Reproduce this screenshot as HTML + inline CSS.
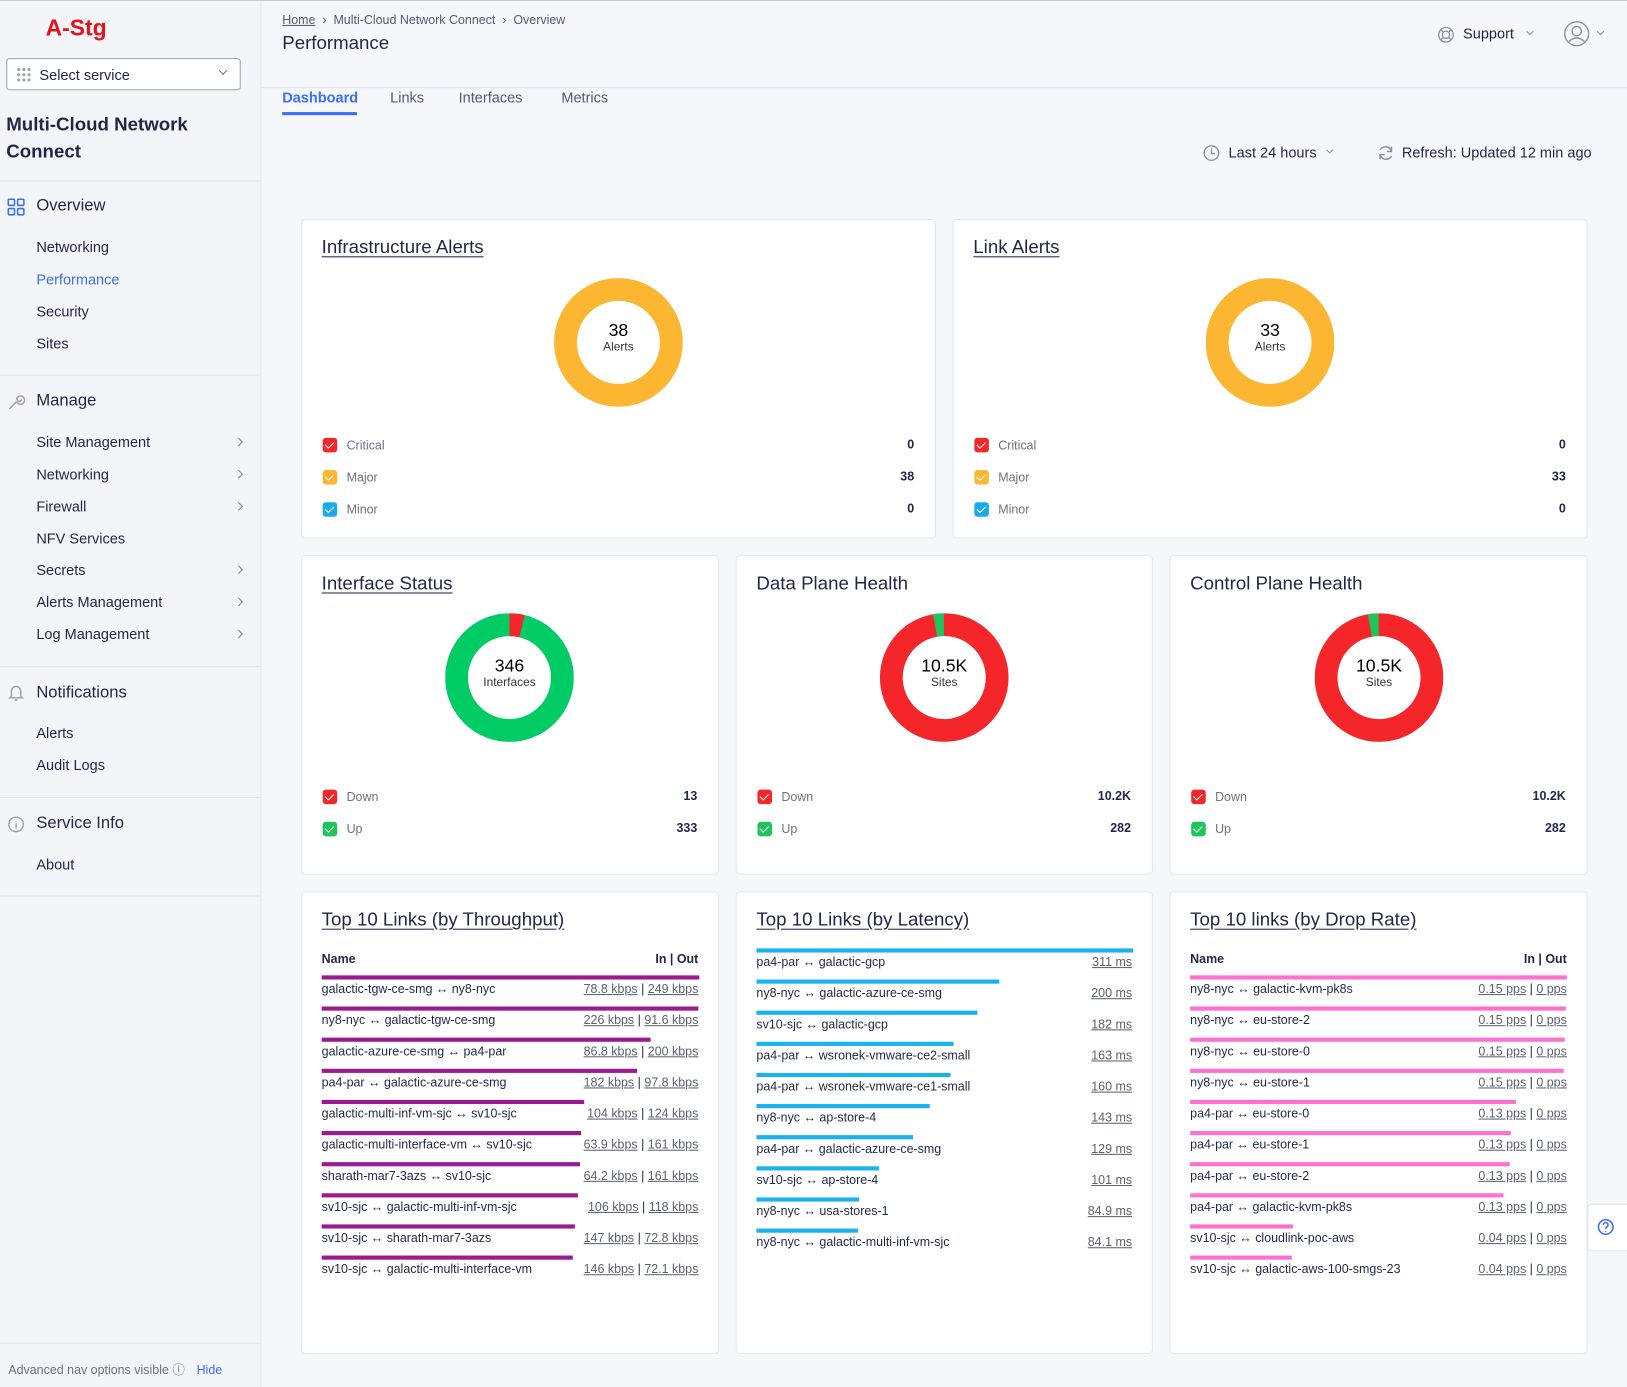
<!DOCTYPE html>
<html><head><meta charset="utf-8"><style>
*{box-sizing:border-box;margin:0;padding:0}
html,body{width:1627px;height:1386px;overflow:hidden;background:#f5f7fa}
body{font-family:"Liberation Sans",sans-serif;color:#1f2747}
#w{position:absolute;left:0;top:0;width:1568px;height:1336px;transform:scale(1.03763);transform-origin:0 0;background:#f5f7fa;border-top:1px solid #c9ccd2}
.a{position:absolute;white-space:nowrap}
#sb{position:absolute;left:0;top:0;width:252px;height:1336px;background:#f4f5f8;border-right:1px solid #e1e4ea}
.hr{position:absolute;left:0;width:252px;height:1px;background:#e1e4ea}
.ni{position:absolute;left:35px;font-size:14px;color:#1f2747}
.sec{position:absolute;left:35px;font-size:16px;color:#1f2747}
.chev{position:absolute;left:227px;width:6px;height:6px;border-right:1.3px solid #7b8194;border-top:1.3px solid #7b8194;transform:rotate(45deg)}
.card{position:absolute;background:#fff;border:1px solid #e3e6ec;border-radius:4px}
.ct{position:absolute;left:19px;top:16px;font-size:18px;text-decoration:underline;text-underline-offset:3px;color:#1f2747;white-space:nowrap}
.lg{position:absolute;left:20px;right:20px;height:16px;font-size:12px;color:#6b7185}
.cb{position:absolute;left:0;top:0;width:14px;height:14px;border-radius:3px}
.cb:after{content:"";position:absolute;left:4px;top:1.5px;width:4px;height:7px;border-right:1.8px solid #fff;border-bottom:1.8px solid #fff;transform:rotate(45deg)}
.lg span.l{position:absolute;left:23px;top:0}
.lg span.v{position:absolute;right:0;top:-1px;font-weight:bold;color:#1f2747}
.dn{position:absolute;width:124px;height:124px}
.dt{position:absolute;width:124px;text-align:center}
.dt b{display:block;font-weight:normal;font-size:17px;margin-top:41px;color:#000}
.dt i{display:block;font-style:normal;font-size:11.5px;color:#333}
.tb{position:absolute;left:19px;right:19px;font-size:12px}
.row{position:absolute;left:0;right:0;height:30px}
.bar{position:absolute;left:0;top:0;height:4px}
.rn{position:absolute;left:0;top:6px;color:#1f2747}
.rv{position:absolute;right:0;top:6px;color:#1f2747}
.rv u{color:#5b6073}
</style></head><body><div id="w">

<div id="sb">
 <div class="a" style="left:44px;top:13px;font-size:22px;font-weight:bold;color:#e8101a">A-Stg</div>
 <div class="a" style="left:6px;top:55px;width:226px;height:31px;border:1px solid #9aa0ae;border-radius:3px;background:#fff">
  <svg class="a" style="left:8px;top:7px" width="16" height="16"><g fill="#9aa0ae"><circle cx="3" cy="3" r="1.5"/><circle cx="8" cy="3" r="1.5"/><circle cx="13" cy="3" r="1.5"/><circle cx="3" cy="8" r="1.5"/><circle cx="8" cy="8" r="1.5"/><circle cx="13" cy="8" r="1.5"/><circle cx="3" cy="13" r="1.5"/><circle cx="8" cy="13" r="1.5"/><circle cx="13" cy="13" r="1.5"/></g></svg>
  <div class="a" style="left:31px;top:7px;font-size:14px">Select service</div>
  <div class="a" style="left:205px;top:8px;width:6px;height:6px;border-right:1.3px solid #6b7185;border-bottom:1.3px solid #6b7185;transform:rotate(45deg)"></div>
 </div>
 <div class="a" style="left:6px;top:106px;font-size:18px;font-weight:bold;line-height:26px">Multi-Cloud Network<br>Connect</div>
 <div class="hr" style="top:173px"></div>
 <svg class="a" style="left:7px;top:190px" width="17" height="17" fill="none" stroke="#3b6ff5" stroke-width="1.5"><rect x="1" y="1" width="6" height="6" rx="1"/><rect x="10" y="1" width="6" height="6" rx="1"/><rect x="1" y="10" width="6" height="6" rx="1"/><rect x="10" y="10" width="6" height="6" rx="1"/></svg>
 <div class="sec" style="top:189px">Overview</div>
 <div class="ni" style="top:229px">Networking</div>
 <div class="ni" style="top:260px;color:#3b6ff5">Performance</div>
 <div class="ni" style="top:291px">Security</div>
 <div class="ni" style="top:322px">Sites</div>
 <div class="hr" style="top:360px"></div>
 <svg class="a" style="left:7px;top:378px" width="17" height="17" fill="none" stroke="#9aa0ae" stroke-width="1.4"><path d="M2 15 L9 8 M9 8 a4 4 0 1 0 2-5 l-2 2 1 2 2 1 2-2"/></svg>
 <div class="sec" style="top:377px">Manage</div>
 <div class="ni" style="top:417px">Site Management</div><div class="chev" style="top:422px"></div>
 <div class="ni" style="top:448px">Networking</div><div class="chev" style="top:453px"></div>
 <div class="ni" style="top:479px">Firewall</div><div class="chev" style="top:484px"></div>
 <div class="ni" style="top:510px">NFV Services</div>
 <div class="ni" style="top:540px">Secrets</div><div class="chev" style="top:545px"></div>
 <div class="ni" style="top:571px">Alerts Management</div><div class="chev" style="top:576px"></div>
 <div class="ni" style="top:602px">Log Management</div><div class="chev" style="top:607px"></div>
 <div class="hr" style="top:641px"></div>
 <svg class="a" style="left:7px;top:658px" width="17" height="17" fill="none" stroke="#9aa0ae" stroke-width="1.4"><path d="M4 12 V7 a4.5 4.5 0 0 1 9 0 V12 L14.5 13.5 H2.5 Z M7 15.5 h3"/></svg>
 <div class="sec" style="top:658px">Notifications</div>
 <div class="ni" style="top:697px">Alerts</div>
 <div class="ni" style="top:728px">Audit Logs</div>
 <div class="hr" style="top:767px"></div>
 <svg class="a" style="left:7px;top:785px" width="17" height="17" fill="none" stroke="#9aa0ae" stroke-width="1.3"><circle cx="8.5" cy="8.5" r="7"/><path d="M8.5 7.5 v5 M8.5 5 v.8"/></svg>
 <div class="sec" style="top:784px">Service Info</div>
 <div class="ni" style="top:824px">About</div>
 <div class="hr" style="top:862px"></div>
 <div class="hr" style="top:1293px"></div>
 <div class="a" style="left:8px;top:1310px;font-size:12px;color:#6b7185">Advanced nav options visible ⓘ <span style="color:#3b6ff5;margin-left:8px">Hide</span></div>
</div>

<div class="a" style="left:272px;top:11px;font-size:12px;color:#555a70"><u>Home</u> &nbsp;›&nbsp; Multi-Cloud Network Connect &nbsp;›&nbsp; Overview</div>
<div class="a" style="left:272px;top:30px;font-size:18px">Performance</div>
<svg class="a" style="left:1385px;top:24px" width="17" height="17" fill="none" stroke="#8a90a2" stroke-width="1.3"><circle cx="8.5" cy="8.5" r="7"/><circle cx="8.5" cy="8.5" r="3.5"/><path d="M3.5 3.5l2.5 2.5M13.5 3.5l-2.5 2.5M3.5 13.5l2.5-2.5M13.5 13.5l-2.5-2.5"/></svg>
<div class="a" style="left:1410px;top:23px;font-size:14px">Support</div>
<div class="a" style="left:1472px;top:27px;width:5px;height:5px;border-right:1.2px solid #8a90a2;border-bottom:1.2px solid #8a90a2;transform:rotate(45deg)"></div>
<svg class="a" style="left:1507px;top:19px" width="25" height="25" fill="none" stroke="#8a90a2" stroke-width="1.3"><circle cx="12.5" cy="12.5" r="11.5"/><circle cx="12.5" cy="10" r="4.5"/><path d="M5 20 q7.5-7 15 0"/></svg>
<div class="a" style="left:1540px;top:27px;width:5px;height:5px;border-right:1.2px solid #8a90a2;border-bottom:1.2px solid #8a90a2;transform:rotate(45deg)"></div>
<div class="a" style="left:252px;top:83px;width:1316px;height:1px;background:#dfe4ec"></div>

<div class="a" style="left:272px;top:85px;font-size:14px;font-weight:bold;color:#3b6ff5">Dashboard</div>
<div class="a" style="left:272px;top:107px;width:72px;height:3px;background:#3b6ff5"></div>
<div class="a" style="left:376px;top:85px;font-size:14px;color:#555a70">Links</div>
<div class="a" style="left:442px;top:85px;font-size:14px;color:#555a70">Interfaces</div>
<div class="a" style="left:541px;top:85px;font-size:14px;color:#555a70">Metrics</div>

<svg class="a" style="left:1159px;top:138px" width="17" height="17" fill="none" stroke="#8a90a2" stroke-width="1.3"><circle cx="8.5" cy="8.5" r="7"/><path d="M8.5 4v5h3.5"/></svg>
<div class="a" style="left:1184px;top:138px;font-size:14px">Last 24 hours</div>
<div class="a" style="left:1279px;top:141px;width:5px;height:5px;border-right:1.2px solid #8a90a2;border-bottom:1.2px solid #8a90a2;transform:rotate(45deg)"></div>
<svg class="a" style="left:1327px;top:138px" width="17" height="17" fill="none" stroke="#8a90a2" stroke-width="1.4"><path d="M14 7 a6 6 0 0 0-11-1.5 M3 10 a6 6 0 0 0 11 1.5 M14 2.5v4.5h-4.5 M3 14.5v-4.5h4.5"/></svg>
<div class="a" style="left:1351px;top:138px;font-size:14px">Refresh: Updated 12 min ago</div>

<!-- row 1 -->
<div class="card" style="left:290px;top:210px;width:612px;height:308px">
 <div class="ct">Infrastructure Alerts</div>
 <svg class="dn" style="left:243px;top:56px" viewBox="0 0 124 124"><circle cx="62" cy="62" r="51" fill="none" stroke="#fdb631" stroke-width="22"/></svg>
 <div class="dt" style="left:243px;top:56px"><b>38</b><i>Alerts</i></div>
 <div class="lg" style="top:210px"><div class="cb" style="background:#f5262a"></div><span class="l">Critical</span><span class="v">0</span></div>
 <div class="lg" style="top:241px"><div class="cb" style="background:#fdb631"></div><span class="l">Major</span><span class="v">38</span></div>
 <div class="lg" style="top:272px"><div class="cb" style="background:#19a9ef"></div><span class="l">Minor</span><span class="v">0</span></div>
</div>
<div class="card" style="left:918px;top:210px;width:612px;height:308px">
 <div class="ct">Link Alerts</div>
 <svg class="dn" style="left:243px;top:56px" viewBox="0 0 124 124"><circle cx="62" cy="62" r="51" fill="none" stroke="#fdb631" stroke-width="22"/></svg>
 <div class="dt" style="left:243px;top:56px"><b>33</b><i>Alerts</i></div>
 <div class="lg" style="top:210px"><div class="cb" style="background:#f5262a"></div><span class="l">Critical</span><span class="v">0</span></div>
 <div class="lg" style="top:241px"><div class="cb" style="background:#fdb631"></div><span class="l">Major</span><span class="v">33</span></div>
 <div class="lg" style="top:272px"><div class="cb" style="background:#19a9ef"></div><span class="l">Minor</span><span class="v">0</span></div>
</div>

<!-- row 2 -->
<div class="card" style="left:290px;top:534px;width:403px;height:308px">
 <div class="ct">Interface Status</div>
 <svg class="dn" style="left:138px;top:55px" viewBox="0 0 124 124"><g transform="rotate(-90 62 62)"><circle cx="62" cy="62" r="51" fill="none" stroke="#00cc66" stroke-width="22"/><circle cx="62" cy="62" r="51" fill="none" stroke="#f5262a" stroke-width="22" stroke-dasharray="12.2 400"/></g></svg>
 <div class="dt" style="left:138px;top:55px"><b>346</b><i>Interfaces</i></div>
 <div class="lg" style="top:225px"><div class="cb" style="background:#f5262a"></div><span class="l">Down</span><span class="v">13</span></div>
 <div class="lg" style="top:256px"><div class="cb" style="background:#1fc45e"></div><span class="l">Up</span><span class="v">333</span></div>
</div>
<div class="card" style="left:709px;top:534px;width:402px;height:308px">
 <div class="ct" style="text-decoration:none">Data Plane Health</div>
 <svg class="dn" style="left:138px;top:55px" viewBox="0 0 124 124"><g transform="rotate(-100 62 62)"><circle cx="62" cy="62" r="51" fill="none" stroke="#f5262a" stroke-width="22"/><circle cx="62" cy="62" r="51" fill="none" stroke="#1fc45e" stroke-width="22" stroke-dasharray="8.6 400"/></g></svg>
 <div class="dt" style="left:138px;top:55px"><b>10.5K</b><i>Sites</i></div>
 <div class="lg" style="top:225px"><div class="cb" style="background:#f5262a"></div><span class="l">Down</span><span class="v">10.2K</span></div>
 <div class="lg" style="top:256px"><div class="cb" style="background:#1fc45e"></div><span class="l">Up</span><span class="v">282</span></div>
</div>
<div class="card" style="left:1127px;top:534px;width:403px;height:308px">
 <div class="ct" style="text-decoration:none">Control Plane Health</div>
 <svg class="dn" style="left:139px;top:55px" viewBox="0 0 124 124"><g transform="rotate(-100 62 62)"><circle cx="62" cy="62" r="51" fill="none" stroke="#f5262a" stroke-width="22"/><circle cx="62" cy="62" r="51" fill="none" stroke="#1fc45e" stroke-width="22" stroke-dasharray="8.6 400"/></g></svg>
 <div class="dt" style="left:139px;top:55px"><b>10.5K</b><i>Sites</i></div>
 <div class="lg" style="top:225px"><div class="cb" style="background:#f5262a"></div><span class="l">Down</span><span class="v">10.2K</span></div>
 <div class="lg" style="top:256px"><div class="cb" style="background:#1fc45e"></div><span class="l">Up</span><span class="v">282</span></div>
</div>

<!-- row 3 -->
<div class="card" style="left:290px;top:858px;width:403px;height:446px">
 <div class="ct">Top 10 Links (by Throughput)</div>
 <div class="tb" style="top:57px;font-weight:bold"><span style="position:absolute;left:0">Name</span><span style="position:absolute;right:0">In | Out</span></div>
 <div class="tb" style="top:80px">
  <div class="row" style="top:0"><div class="bar" style="width:364px;background:#9b1a8e"></div><span class="rn">galactic-tgw-ce-smg ↔ ny8-nyc</span><span class="rv"><u>78.8 kbps</u> | <u>249 kbps</u></span></div>
  <div class="row" style="top:30px"><div class="bar" style="width:363px;background:#9b1a8e"></div><span class="rn">ny8-nyc ↔ galactic-tgw-ce-smg</span><span class="rv"><u>226 kbps</u> | <u>91.6 kbps</u></span></div>
  <div class="row" style="top:60px"><div class="bar" style="width:317px;background:#9b1a8e"></div><span class="rn">galactic-azure-ce-smg ↔ pa4-par</span><span class="rv"><u>86.8 kbps</u> | <u>200 kbps</u></span></div>
  <div class="row" style="top:90px"><div class="bar" style="width:304px;background:#9b1a8e"></div><span class="rn">pa4-par ↔ galactic-azure-ce-smg</span><span class="rv"><u>182 kbps</u> | <u>97.8 kbps</u></span></div>
  <div class="row" style="top:120px"><div class="bar" style="width:253px;background:#9b1a8e"></div><span class="rn">galactic-multi-inf-vm-sjc ↔ sv10-sjc</span><span class="rv"><u>104 kbps</u> | <u>124 kbps</u></span></div>
  <div class="row" style="top:150px"><div class="bar" style="width:250px;background:#9b1a8e"></div><span class="rn">galactic-multi-interface-vm ↔ sv10-sjc</span><span class="rv"><u>63.9 kbps</u> | <u>161 kbps</u></span></div>
  <div class="row" style="top:180px"><div class="bar" style="width:249px;background:#9b1a8e"></div><span class="rn">sharath-mar7-3azs ↔ sv10-sjc</span><span class="rv"><u>64.2 kbps</u> | <u>161 kbps</u></span></div>
  <div class="row" style="top:210px"><div class="bar" style="width:247px;background:#9b1a8e"></div><span class="rn">sv10-sjc ↔ galactic-multi-inf-vm-sjc</span><span class="rv"><u>106 kbps</u> | <u>118 kbps</u></span></div>
  <div class="row" style="top:240px"><div class="bar" style="width:244px;background:#9b1a8e"></div><span class="rn">sv10-sjc ↔ sharath-mar7-3azs</span><span class="rv"><u>147 kbps</u> | <u>72.8 kbps</u></span></div>
  <div class="row" style="top:270px"><div class="bar" style="width:242px;background:#9b1a8e"></div><span class="rn">sv10-sjc ↔ galactic-multi-interface-vm</span><span class="rv"><u>146 kbps</u> | <u>72.1 kbps</u></span></div>
 </div>
</div>
<div class="card" style="left:709px;top:858px;width:402px;height:446px">
 <div class="ct">Top 10 Links (by Latency)</div>
 <div class="tb" style="top:54px">
  <div class="row" style="top:0"><div class="bar" style="width:363px;background:#19b2f0"></div><span class="rn">pa4-par ↔ galactic-gcp</span><span class="rv"><u>311 ms</u></span></div>
  <div class="row" style="top:30px"><div class="bar" style="width:234px;background:#19b2f0"></div><span class="rn">ny8-nyc ↔ galactic-azure-ce-smg</span><span class="rv"><u>200 ms</u></span></div>
  <div class="row" style="top:60px"><div class="bar" style="width:213px;background:#19b2f0"></div><span class="rn">sv10-sjc ↔ galactic-gcp</span><span class="rv"><u>182 ms</u></span></div>
  <div class="row" style="top:90px"><div class="bar" style="width:190px;background:#19b2f0"></div><span class="rn">pa4-par ↔ wsronek-vmware-ce2-small</span><span class="rv"><u>163 ms</u></span></div>
  <div class="row" style="top:120px"><div class="bar" style="width:187px;background:#19b2f0"></div><span class="rn">pa4-par ↔ wsronek-vmware-ce1-small</span><span class="rv"><u>160 ms</u></span></div>
  <div class="row" style="top:150px"><div class="bar" style="width:167px;background:#19b2f0"></div><span class="rn">ny8-nyc ↔ ap-store-4</span><span class="rv"><u>143 ms</u></span></div>
  <div class="row" style="top:180px"><div class="bar" style="width:151px;background:#19b2f0"></div><span class="rn">pa4-par ↔ galactic-azure-ce-smg</span><span class="rv"><u>129 ms</u></span></div>
  <div class="row" style="top:210px"><div class="bar" style="width:118px;background:#19b2f0"></div><span class="rn">sv10-sjc ↔ ap-store-4</span><span class="rv"><u>101 ms</u></span></div>
  <div class="row" style="top:240px"><div class="bar" style="width:99px;background:#19b2f0"></div><span class="rn">ny8-nyc ↔ usa-stores-1</span><span class="rv"><u>84.9 ms</u></span></div>
  <div class="row" style="top:270px"><div class="bar" style="width:98px;background:#19b2f0"></div><span class="rn">ny8-nyc ↔ galactic-multi-inf-vm-sjc</span><span class="rv"><u>84.1 ms</u></span></div>
 </div>
</div>
<div class="card" style="left:1127px;top:858px;width:403px;height:446px">
 <div class="ct">Top 10 links (by Drop Rate)</div>
 <div class="tb" style="top:57px;font-weight:bold"><span style="position:absolute;left:0">Name</span><span style="position:absolute;right:0">In | Out</span></div>
 <div class="tb" style="top:80px">
  <div class="row" style="top:0"><div class="bar" style="width:363px;background:#ff6fcf"></div><span class="rn">ny8-nyc ↔ galactic-kvm-pk8s</span><span class="rv"><u>0.15 pps</u> | <u>0 pps</u></span></div>
  <div class="row" style="top:30px"><div class="bar" style="width:362px;background:#ff6fcf"></div><span class="rn">ny8-nyc ↔ eu-store-2</span><span class="rv"><u>0.15 pps</u> | <u>0 pps</u></span></div>
  <div class="row" style="top:60px"><div class="bar" style="width:361px;background:#ff6fcf"></div><span class="rn">ny8-nyc ↔ eu-store-0</span><span class="rv"><u>0.15 pps</u> | <u>0 pps</u></span></div>
  <div class="row" style="top:90px"><div class="bar" style="width:360px;background:#ff6fcf"></div><span class="rn">ny8-nyc ↔ eu-store-1</span><span class="rv"><u>0.15 pps</u> | <u>0 pps</u></span></div>
  <div class="row" style="top:120px"><div class="bar" style="width:314px;background:#ff6fcf"></div><span class="rn">pa4-par ↔ eu-store-0</span><span class="rv"><u>0.13 pps</u> | <u>0 pps</u></span></div>
  <div class="row" style="top:150px"><div class="bar" style="width:309px;background:#ff6fcf"></div><span class="rn">pa4-par ↔ eu-store-1</span><span class="rv"><u>0.13 pps</u> | <u>0 pps</u></span></div>
  <div class="row" style="top:180px"><div class="bar" style="width:308px;background:#ff6fcf"></div><span class="rn">pa4-par ↔ eu-store-2</span><span class="rv"><u>0.13 pps</u> | <u>0 pps</u></span></div>
  <div class="row" style="top:210px"><div class="bar" style="width:302px;background:#ff6fcf"></div><span class="rn">pa4-par ↔ galactic-kvm-pk8s</span><span class="rv"><u>0.13 pps</u> | <u>0 pps</u></span></div>
  <div class="row" style="top:240px"><div class="bar" style="width:99px;background:#ff6fcf"></div><span class="rn">sv10-sjc ↔ cloudlink-poc-aws</span><span class="rv"><u>0.04 pps</u> | <u>0 pps</u></span></div>
  <div class="row" style="top:270px"><div class="bar" style="width:98px;background:#ff6fcf"></div><span class="rn">sv10-sjc ↔ galactic-aws-100-smgs-23</span><span class="rv"><u>0.04 pps</u> | <u>0 pps</u></span></div>
 </div>
</div>

<div class="a" style="left:1530px;top:1159px;width:40px;height:46px;background:#fff;border:1px solid #e3e6ec;border-radius:4px 0 0 4px"></div>
<svg class="a" style="left:1539px;top:1173px" width="17" height="17" fill="none" stroke="#3b6ff5" stroke-width="1.5"><circle cx="8.5" cy="8.5" r="7"/><path d="M6.3 6.5 a2.2 2.2 0 1 1 3 2 c-.8.4-.8.9-.8 1.8 M8.5 12.3v.8"/></svg>
</div></body></html>
